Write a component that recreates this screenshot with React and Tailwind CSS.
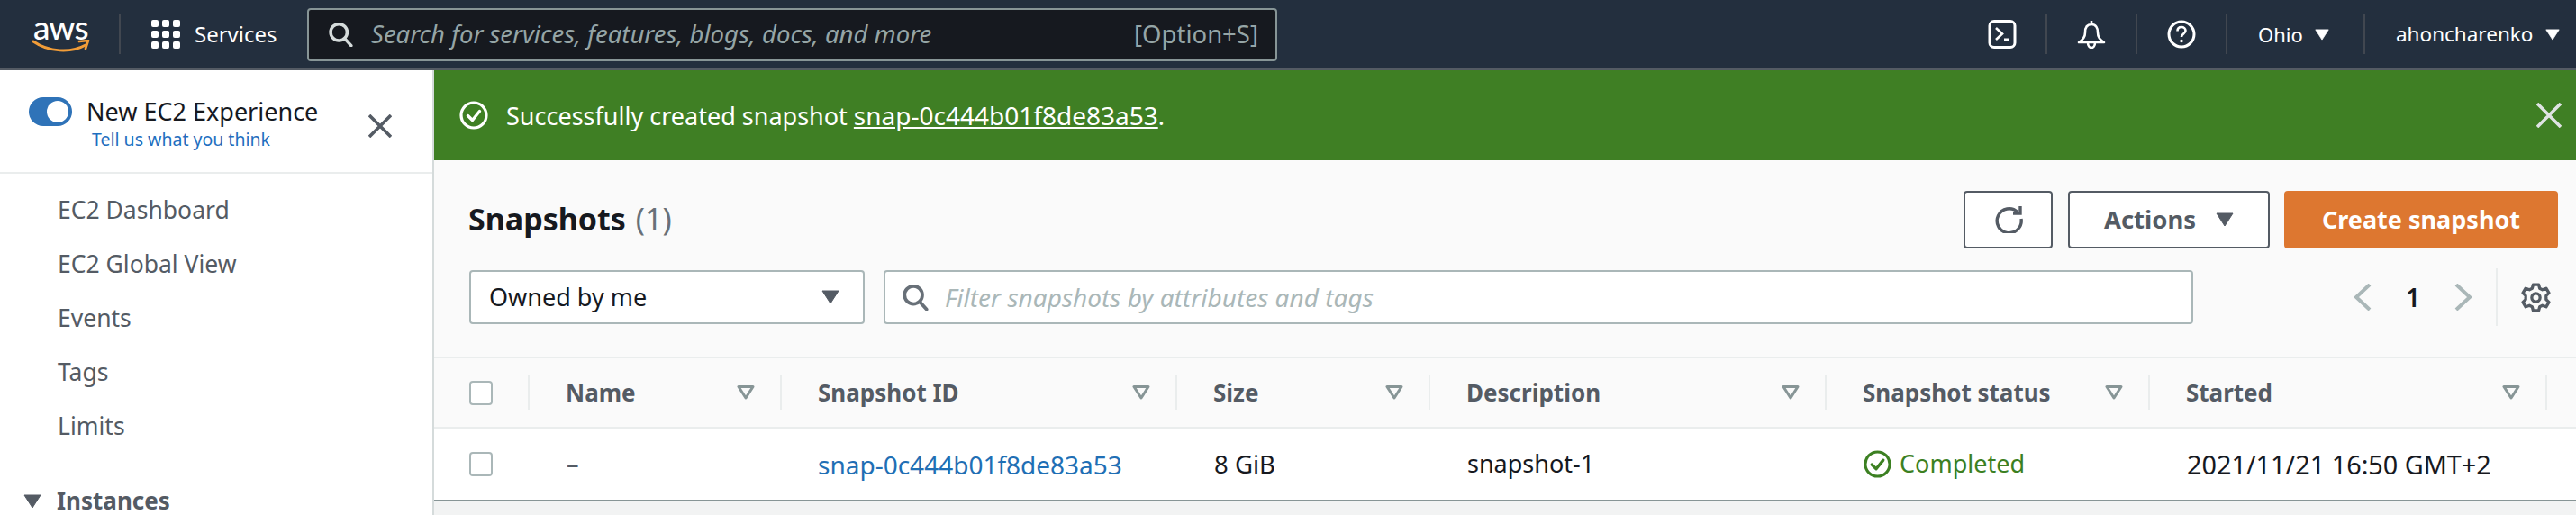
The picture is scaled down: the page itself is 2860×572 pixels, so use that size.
const FONT = 'font-["Noto_Sans",sans-serif]'

function Caret({ className }) {
  return (
    <svg viewBox="0 0 20 16" className={className} fill="currentColor">
      <path d="M1 1h18l-9 14z" stroke="currentColor" strokeWidth="1" strokeLinejoin="round" />
    </svg>
  )
}

function SearchIcon({ className }) {
  return (
    <svg viewBox="0 0 32 32" className={className} fill="none" stroke="currentColor" strokeWidth="4">
      <circle cx="14" cy="13.5" r="10.5" />
      <path d="M21.5 21.5l8 9" strokeLinecap="round" />
    </svg>
  )
}

function CheckCircle({ className }) {
  return (
    <svg viewBox="0 0 32 32" className={className} fill="none" stroke="currentColor">
      <circle cx="16" cy="16" r="14" strokeWidth="3.2" />
      <path d="M9.5 16.5l5 5 8-10" strokeWidth="3.4" strokeLinecap="round" strokeLinejoin="round" />
    </svg>
  )
}

function Divider() {
  return <div className="w-[2px] h-[44px] bg-[#414750] shrink-0" />
}

function NavBar() {
  return (
    <header className="h-[78px] shrink-0 bg-[#232f3e] border-b-2 border-[#545b64] flex items-center text-white">
      <div className="w-[132px] pl-[36px] shrink-0 flex flex-col items-start">
        <span className="text-[37px] leading-[28px] font-medium tracking-[-1px] pl-[1px] font-['Lato',sans-serif]">aws</span>
        <svg viewBox="0 0 64 16" className="w-[64px] h-[16px] text-[#f29d38]" fill="none" stroke="currentColor">
          <path d="M1 2c17 12 42 13 58 4" strokeWidth="3" strokeLinecap="round" />
          <path d="M52 2l10-1-3 9" strokeWidth="2.6" strokeLinecap="round" strokeLinejoin="round" />
        </svg>
      </div>
      <Divider />
      <div className="grid grid-cols-3 gap-[4px] ml-[34px] w-[32px] shrink-0">
        {Array.from({ length: 9 }).map((_, i) => (
          <span key={i} className="h-[8px] rounded-[2px] bg-white" />
        ))}
      </div>
      <span className="ml-[16px] w-[125px] shrink-0 text-[24px]">Services</span>
      <div className="w-[1077px] h-[59px] shrink-0 rounded-[4px] border-2 border-[#879596] bg-[#16191f] flex items-center pl-[21px] pr-[19px]">
        <SearchIcon className="w-[28px] h-[28px] text-[#d5dbdb] shrink-0" />
        <span className="ml-[20px] flex-1 text-[27.5px] italic text-[#95a5a6]">Search for services, features, blogs, docs, and more</span>
        <span className="text-[27.5px] text-[#95a5a6]">[Option+S]</span>
      </div>
      <div className="ml-[789px] w-[64px] flex shrink-0">
        <svg viewBox="0 0 32 32" className="w-[32px] h-[32px]" fill="none" stroke="currentColor" strokeWidth="3">
          <rect x="2" y="1.5" width="28" height="29" rx="5" />
          <path d="M9 9l7 6.5-7 6.5" strokeWidth="2.6" />
          <path d="M18 22h5" strokeWidth="3" />
        </svg>
      </div>
      <Divider />
      <div className="w-[98px] flex justify-center shrink-0">
        <svg viewBox="0 0 32 32" className="w-[32px] h-[32px]" fill="none" stroke="currentColor" strokeWidth="2.6">
          <path d="M16 1v4M16 5c-5 0-7 4-7 9 0 5-2 8-7 11h28c-5-3-7-6-7-11 0-5-2-9-7-9z" strokeLinejoin="round" />
          <path d="M12 25c0 4 2 6 4 6s4-2 4-6" />
        </svg>
      </div>
      <Divider />
      <div className="w-[98px] flex justify-center shrink-0">
        <svg viewBox="0 0 32 32" className="w-[32px] h-[32px]" fill="none" stroke="currentColor" strokeWidth="3">
          <circle cx="16" cy="16" r="14" />
          <path d="M11.500 12.500c0-3 2-4.500 4.500-4.500s4.500 1.700 4.500 4c0 3.500-4.500 3.500-4.500 7" strokeWidth="2.6" />
          <circle cx="16" cy="23.500" r="1.800" fill="currentColor" stroke="none" />
        </svg>
      </div>
      <Divider />
      <div className="w-[151px] pl-[34px] flex items-center shrink-0">
        <span className="text-[22px]">Ohio</span>
        <Caret className="w-[16px] h-[13px] ml-[13px] text-white" />
      </div>
      <Divider />
      <div className="pl-[34px] flex items-center shrink-0">
        <span className="text-[22.5px]">ahoncharenko</span>
        <Caret className="w-[16px] h-[13px] ml-[14px] text-white" />
      </div>
    </header>
  )
}

const navItems = ['EC2 Dashboard', 'EC2 Global View', 'Events', 'Tags', 'Limits']

function Sidebar() {
  return (
    <aside className="w-[482px] shrink-0 bg-white border-r-2 border-[#d5dbdb]">
      <div className="h-[115px] border-b-2 border-[#eaeded] relative">
        <div className="flex items-center pt-[26px] pl-[32px]">
          <div className="w-[48px] h-[32px] rounded-full bg-[#2f73b8] flex items-center justify-end pr-[4px] shrink-0">
            <span className="w-[24px] h-[24px] rounded-full bg-white" />
          </div>
          <span className="ml-[16px] text-[27px] leading-[40px] text-[#16191f]">New EC2 Experience</span>
        </div>
        <a className="block ml-[102px] mt-[-3px] text-[19.5px] leading-[28px] text-[#1f6fc0]">Tell us what you think</a>
        <svg viewBox="0 0 26 26" className="absolute left-[409px] top-[49px] w-[26px] h-[26px] text-[#545b64]" fill="none" stroke="currentColor" strokeWidth="3.6">
          <path d="M1 1l24 24M25 1L1 25" />
        </svg>
      </div>
      <nav className="pt-[11px] pl-[64px]">
        {navItems.map(item => (
          <div key={item} className="h-[60px] flex items-center text-[26.5px] text-[#545b64]">{item}</div>
        ))}
      </nav>
      <div className="mt-[33px] flex items-center pl-[26px] text-[#545b64]">
        <Caret className="w-[20px] h-[16px] mr-[17px]" />
        <span className="text-[26px] font-bold">Instances</span>
      </div>
    </aside>
  )
}

function FilterMark() {
  return (
    <svg viewBox="0 0 20 16" className="w-[20px] h-[16px] text-[#879596] shrink-0" fill="none" stroke="currentColor" strokeWidth="3">
      <path d="M2 1.500h16L10 14z" strokeLinejoin="round" />
    </svg>
  )
}

const columns = [
  { title: 'Name', width: 'w-[280px]' },
  { title: 'Snapshot ID', width: 'w-[439px]' },
  { title: 'Size', width: 'w-[281px]' },
  { title: 'Description', width: 'w-[440px]' },
  { title: 'Snapshot status', width: 'w-[359px]' },
  { title: 'Started', width: 'w-[441px]' },
]

function Checkbox() {
  return <span className="block w-[26px] h-[27px] rounded-[4px] border-2 border-[#aab7b8] bg-white" />
}

function SnapshotTable() {
  return (
    <div className="border-t-2 border-[#eaeded]">
      <div className="h-[78px] flex border-b-2 border-[#eaeded] bg-[#fafafa]">
        <div className="w-[106px] shrink-0 flex items-center pl-[39px] relative">
          <Checkbox />
          <span className="absolute right-0 top-[19px] h-[38px] w-[2px] bg-[#eaeded]" />
        </div>
        {columns.map(col => (
          <div key={col.title} className={`${col.width} shrink-0 flex items-center pl-[40px] pr-[30px] justify-between relative`}>
            <span className="text-[26px] font-bold text-[#545b64]">{col.title}</span>
            <FilterMark />
            <span className="absolute right-0 top-[19px] h-[38px] w-[2px] bg-[#eaeded]" />
          </div>
        ))}
      </div>
      <div className="h-[81px] flex items-center bg-white border-b-2 border-[#879596] text-[27px] text-[#16191f]">
        <div className="w-[106px] shrink-0 pl-[39px]"><Checkbox /></div>
        <div className="w-[280px] shrink-0 pl-[41px] font-bold text-[#545b64]">–</div>
        <div className="w-[439px] shrink-0 pl-[40px] text-[28px] text-[#1f6fb5]">snap-0c444b01f8de83a53</div>
        <div className="w-[281px] shrink-0 pl-[41px] text-[27.5px]">8 GiB</div>
        <div className="w-[440px] shrink-0 pl-[41px]">snapshot-1</div>
        <div className="w-[359px] shrink-0 pl-[41px] flex items-center text-[#3c8022]">
          <CheckCircle className="w-[31px] h-[31px] mr-[9px] shrink-0" />
          Completed
        </div>
        <div className="w-[441px] shrink-0 pl-[41px] text-[28.8px]">2021/11/21 16:50 GMT+2</div>
      </div>
    </div>
  )
}

function Main() {
  return (
    <main className="flex-1 min-w-0 bg-[#f2f3f3] flex flex-col">
      <div className="h-[100px] shrink-0 bg-[#3f7f24] flex items-center pl-[28px] pr-[16px] text-white">
        <CheckCircle className="w-[32px] h-[32px] shrink-0" />
        <span className="ml-[20px] text-[27px]">
          Successfully created snapshot <a className="underline text-[28px]">snap-0c444b01f8de83a53</a>.
        </span>
        <svg viewBox="0 0 28 28" className="ml-auto w-[28px] h-[28px] text-[#dfe3e3]" fill="none" stroke="currentColor" strokeWidth="3.6">
          <path d="M1 1l26 26M27 1L1 27" />
        </svg>
      </div>
      <div className="h-[218px] shrink-0 bg-[#fafafa] pl-[39px] pr-[20px] pt-[34px]">
        <div className="h-[64px] flex items-center">
          <h2 className="text-[34px] font-bold text-[#16191f] pb-[2px] ml-[-1px]">
            Snapshots <span className="font-normal text-[#687078] ml-[2px]">(1)</span>
          </h2>
          <button className="ml-auto w-[99px] h-[64px] rounded-[4px] border-2 border-[#545b64] bg-white flex items-center justify-center text-[#545b64]">
            <svg viewBox="0 0 32 32" className="w-[32px] h-[32px] mt-[-2px]" fill="none" stroke="currentColor" strokeWidth="3.4">
              <path d="M26 8.500A13.500 13.500 0 1 0 30 16" />
              <path d="M21 10h8V2" />
            </svg>
          </button>
          <button className="ml-[17px] w-[224px] h-[64px] rounded-[4px] border-2 border-[#545b64] bg-white flex items-center justify-center text-[#545b64]">
            <span className="text-[27.5px] font-bold">Actions</span>
            <Caret className="w-[20px] h-[16px] ml-[22px]" />
          </button>
          <button className="ml-[16px] w-[304px] h-[64px] rounded-[4px] bg-[#dd7730] text-white text-[27px] font-bold">Create snapshot</button>
        </div>
        <div className="mt-[24px] h-[60px] flex items-center">
          <div className="w-[439px] h-[60px] shrink-0 rounded-[4px] border-2 border-[#aab7b8] bg-white flex items-center pl-[20px] pr-[26px]">
            <span className="flex-1 text-[27px] text-[#16191f]">Owned by me</span>
            <Caret className="w-[20px] h-[16px] text-[#545b64]" />
          </div>
          <div className="ml-[21px] w-[1454px] h-[60px] shrink-0 rounded-[4px] border-2 border-[#aab7b8] bg-white flex items-center pl-[18px]">
            <SearchIcon className="w-[30px] h-[30px] text-[#687078] shrink-0" />
            <span className="ml-[18px] text-[28px] italic text-[#aab7b8]">Filter snapshots by attributes and tags</span>
          </div>
          <svg viewBox="0 0 20 30" className="ml-[178px] w-[20px] h-[30px] text-[#aab7b8]" fill="none" stroke="currentColor" strokeWidth="4">
            <path d="M18 1L3 15l15 14" />
          </svg>
          <span className="w-[92px] text-center text-[28px] font-semibold text-[#16191f]">1</span>
          <svg viewBox="0 0 20 30" className="w-[20px] h-[30px] text-[#aab7b8]" fill="none" stroke="currentColor" strokeWidth="4">
            <path d="M2 1l15 14L2 29" />
          </svg>
          <span className="ml-[26px] w-[2px] h-[64px] bg-[#eaeded]" />
          <svg viewBox="0 0 32 32" className="ml-[26px] w-[33px] h-[33px] text-[#545b64]" fill="none" stroke="currentColor" strokeWidth="3.2">
            <path d="M13 2h6l1 4 3 1.500 4-1.500 3 5-3 3v4l3 3-3 5-4-1.500-3 1.500-1 4h-6l-1-4-3-1.500-4 1.500-3-5 3-3v-4l-3-3 3-5 4 1.500 3-1.500z" strokeLinejoin="round" />
            <circle cx="16" cy="16" r="4.500" />
          </svg>
        </div>
      </div>
      <SnapshotTable />
    </main>
  )
}

export default function App() {
  return (
    <div className={`${FONT} w-[2860px] h-[572px] overflow-hidden flex flex-col`}>
      <NavBar />
      <div className="flex-1 min-h-0 flex">
        <Sidebar />
        <Main />
      </div>
    </div>
  )
}
